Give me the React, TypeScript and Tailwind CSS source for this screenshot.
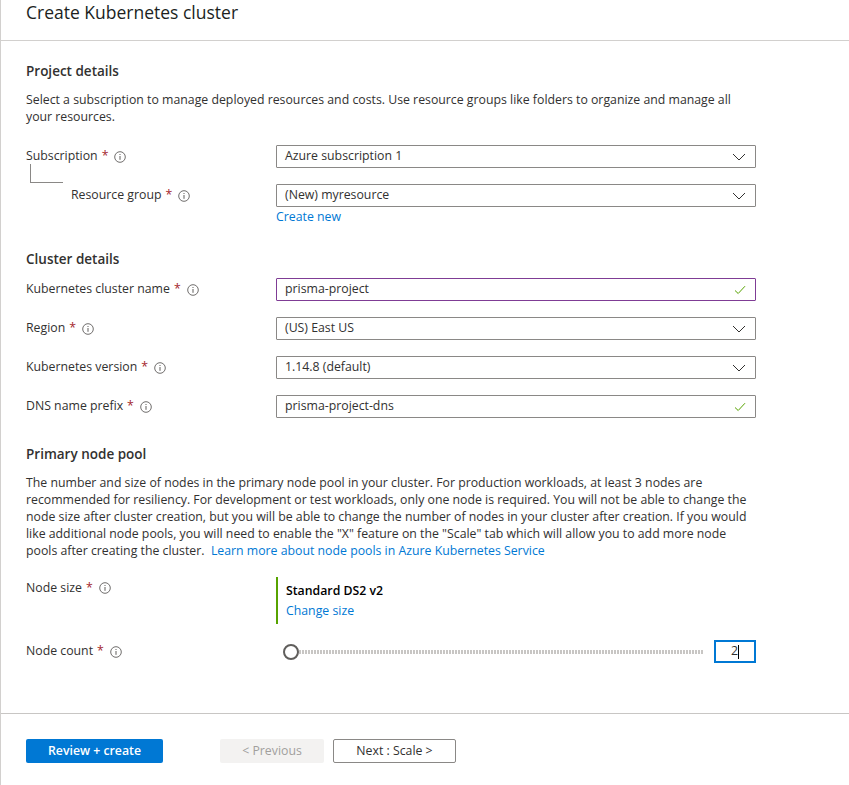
import React from "react";

const font = "font-['Open_Sans','Noto_Sans',sans-serif]";

function Info() {
  return (
    <svg width="12" height="12" viewBox="0 0 12 12" className="ml-[6px] shrink-0">
      <circle cx="6" cy="6" r="5.3" fill="none" stroke="#605e5c" strokeWidth="0.9" />
      <rect x="5.5" y="5" width="1" height="3.8" fill="#605e5c" />
      <rect x="5.5" y="3" width="1" height="1" fill="#605e5c" />
    </svg>
  );
}

function Label({ text }: { text: string }) {
  return (
    <div className="flex items-center">
      <span>{text}</span>
      <span className="text-[#a4262c] ml-[4px]">*</span>
      <Info />
    </div>
  );
}

function Chevron() {
  return (
    <svg width="14" height="8" viewBox="0 0 14 8" className="shrink-0">
      <path d="M1 1 L7 7 L13 1" fill="none" stroke="#323130" strokeWidth="1" />
    </svg>
  );
}

function Check() {
  return (
    <svg width="12" height="10" viewBox="0 0 12 10" className="shrink-0">
      <path d="M1 5.5 L4.2 8.5 L11 1.2" fill="none" stroke="#57a300" strokeWidth="1" />
    </svg>
  );
}

function Field({ value, kind, focused }: { value: string; kind: "select" | "text"; focused?: boolean }) {
  return (
    <div
      className={`w-[480px] h-[23px] border ${focused ? "border-[#7f3c95]" : "border-[#8a8886]"} flex items-center justify-between pl-[8px] pr-[9px] rounded-[1px]`}
    >
      <span>{value}</span>
      {kind === "select" ? <Chevron /> : <Check />}
    </div>
  );
}

function Row({ label, children, className = "" }: { label: React.ReactNode; children: React.ReactNode; className?: string }) {
  return (
    <div className={`flex items-center ${className}`}>
      <div className="w-[250px] shrink-0">{label}</div>
      {children}
    </div>
  );
}

export default function App() {
  return (
    <div className={`${font} w-[849px] h-[785px] bg-white border-l border-[#d2d0ce] text-[12.3px] text-[#323130] flex flex-col`}>
      <div className="h-[41px] border-b border-[#d2d0ce] px-[25px] pt-[1px] text-[17.5px] leading-[22px] text-[#201f1e]">
        Create Kubernetes cluster
      </div>

      <div className="px-[25px] flex flex-col flex-1">
        <div className="mt-[20px] text-[13.5px] font-semibold leading-[20px]">Project details</div>
        <p className="mt-[10px] leading-[17px] w-[730px]">
          Select a subscription to manage deployed resources and costs. Use resource groups like folders to organize and manage all your resources.
        </p>

        <Row label={<Label text="Subscription" />} className="mt-[20px]">
          <Field value="Azure subscription 1" kind="select" />
        </Row>
        <Row
          className="mt-[16px]"
          label={
            <div className="flex items-center">
              <div className="ml-[4px] w-[33px] h-[19px] border-l border-b border-[#8a8886] self-start -mt-[22px] mr-[8px]" />
              <Label text="Resource group" />
            </div>
          }
        >
          <Field value="(New) myresource" kind="select" />
        </Row>
        <div className="ml-[250px] leading-[18px] mt-[1px] text-[#0078d4]">Create new</div>

        <div className="mt-[23px] text-[13.5px] font-semibold leading-[20px]">Cluster details</div>
        <Row label={<Label text="Kubernetes cluster name" />} className="mt-[9px]">
          <Field value="prisma-project" kind="text" focused />
        </Row>
        <Row label={<Label text="Region" />} className="mt-[16px]">
          <Field value="(US) East US" kind="select" />
        </Row>
        <Row label={<Label text="Kubernetes version" />} className="mt-[16px]">
          <Field value="1.14.8 (default)" kind="select" />
        </Row>
        <Row label={<Label text="DNS name prefix" />} className="mt-[16px]">
          <Field value="prisma-project-dns" kind="text" />
        </Row>

        <div className="mt-[26px] text-[13.5px] font-semibold leading-[20px]">Primary node pool</div>
        <p className="mt-[10px] leading-[17px] w-[730px]">
          The number and size of nodes in the primary node pool in your cluster. For production workloads, at least 3 nodes are recommended for resiliency. For development or test workloads, only one node is required. You will not be able to change the node size after cluster creation, but you will be able to change the number of nodes in your cluster after creation. If you would like additional node pools, you will need to enable the "X" feature on the "Scale" tab which will allow you to add more node pools after creating the cluster.{"\u00a0 "}
          <span className="text-[#0078d4]">Learn more about node pools in Azure Kubernetes Service</span>
        </p>

        <div className="flex items-start mt-[18px]">
          <div className="w-[250px] shrink-0 pt-[2px]">
            <Label text="Node size" />
          </div>
          <div className="border-l-2 border-[#57a300] pl-[8px] h-[47px] flex flex-col justify-center">
            <div className="font-semibold text-[#000] leading-[20px]">Standard DS2 v2</div>
            <div className="text-[#0078d4] leading-[20px]">Change size</div>
          </div>
        </div>

        <Row label={<Label text="Node count" />} className="mt-[16px]">
          <div className="w-[480px] flex items-center">
            <div className="ml-[7px] w-[16px] h-[16px] rounded-full border-2 border-[#605e5c] bg-white shrink-0" />
            <div className="w-[405px] h-[4px] bg-[repeating-linear-gradient(90deg,#c8c6c4_0_2px,transparent_2px_3px)]" />
            <div className="ml-auto w-[42px] h-[23px] border-2 border-[#0078d4] flex items-center justify-center">
              <span className="leading-none">2</span>
              <span className="w-[1px] h-[14px] bg-black" />
            </div>
          </div>
        </Row>
      </div>

      <div className="h-[72px] border-t border-[#c8c6c4] px-[25px] pt-[25px] flex items-start">
        <button className="w-[137px] h-[24px] bg-[#0078d4] text-white font-semibold rounded-[2px] leading-none">
          Review + create
        </button>
        <button className="ml-[57px] w-[104px] h-[24px] bg-[#f3f2f1] text-[#a19f9d] rounded-[2px] leading-none">
          &lt; Previous
        </button>
        <button className="ml-[9px] w-[123px] h-[24px] bg-white border border-[#8a8886] text-[#323130] rounded-[2px] leading-none">
          Next : Scale &gt;
        </button>
      </div>
    </div>
  );
}
